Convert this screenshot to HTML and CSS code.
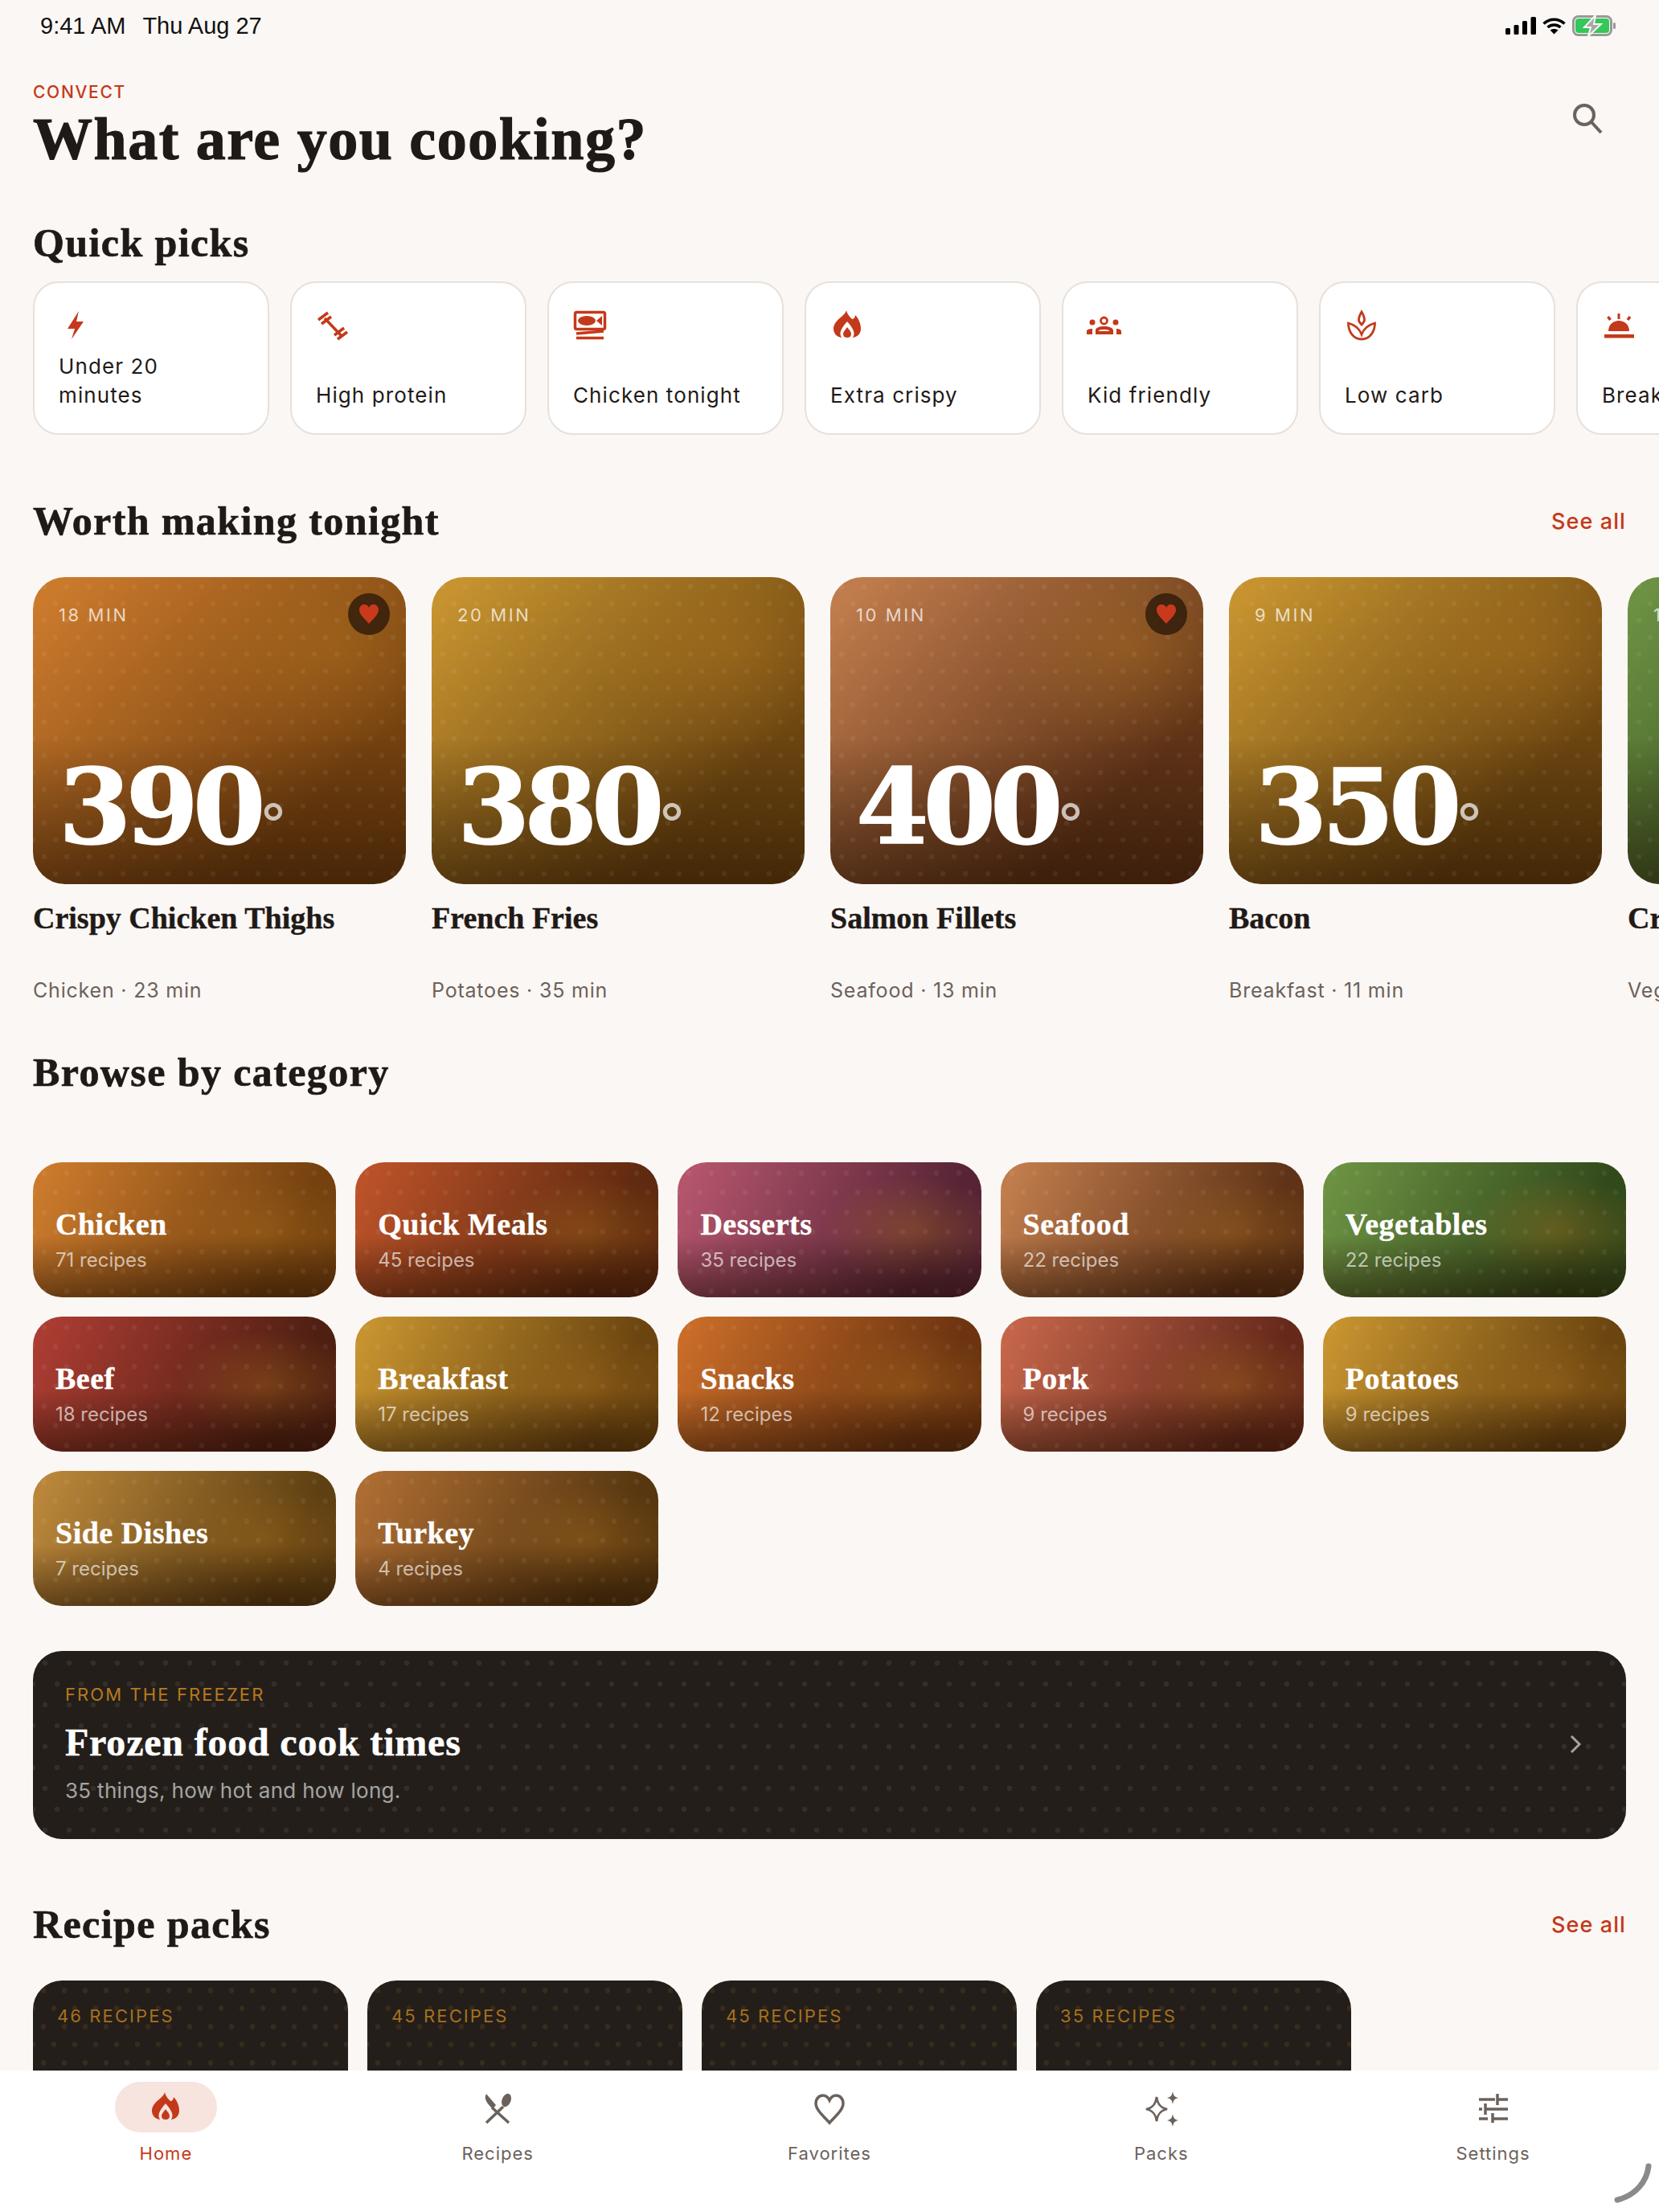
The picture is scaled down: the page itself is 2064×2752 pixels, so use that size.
FILE: index.html
```html
<!DOCTYPE html>
<html lang="en">
<head>
    <meta charset="UTF-8">
    <meta name="viewport" content="width=device-width, initial-scale=1.0">
    <title>Convect</title>
    <link rel="stylesheet" href="styles.css">
</head>
<body>
<div class="app">
    <div class="status-bar">
        <div class="status-time"><span>9:41 AM</span><span>Thu Aug 27</span></div>
        <div class="status-icons">
            <svg width="38" height="22" viewBox="0 0 38 22"><rect x="0" y="14" width="6" height="8" rx="1.5"/><rect x="10.5" y="10" width="6" height="12" rx="1.5"/><rect x="21" y="5" width="6" height="17" rx="1.5"/><rect x="31.5" y="0" width="6.5" height="22" rx="1.5"/></svg>
            <svg width="29" height="21" viewBox="0 0 29 21"><path d="M1.5 7.5C9 .5 20 .5 27.5 7.5" class="wifi-arc"/><path d="M6.5 12C11 8 18 8 22.5 12" class="wifi-arc"/><path d="M14.5 20.5L9.5 15.5C12 13.5 17 13.5 19.5 15.5Z"/></svg>
            <svg width="56" height="26" viewBox="0 0 56 26"><rect x="1.5" y="1.5" width="47" height="23" rx="6" class="batt-shell"/><rect x="4" y="4" width="42" height="18" rx="4" class="batt-fill"/><rect x="51" y="9" width="3" height="8" rx="1.5" class="batt-cap"/><path d="M29 0L15 15H23L20 26L36 11H27Z" class="batt-bolt"/></svg>
        </div>
    </div>

    <div class="content">
        <div class="top-row">
            <div>
                <div class="eyebrow">CONVECT</div>
                <h1>What are you cooking?</h1>
            </div>
            <svg class="search-icon" width="40" height="40" viewBox="0 0 40 40"><circle cx="15" cy="16" r="12"/><path d="M24 25L36 38"/></svg>
        </div>

        <h2 class="section-title quick-title">Quick picks</h2>
        <div class="picks-row">
            <div class="pick">
                <svg class="pick-icon" viewBox="0 0 42 42"><path d="M25 3L11 25H20L16 38L31 16H22Z"/></svg>
                <span>Under 20 minutes</span>
            </div>
            <div class="pick">
                <svg class="pick-icon" viewBox="0 0 42 42"><path d="M11 12L31 33M3 14L15 5M7 19L19 10M23 33L35 24M27 38L39 29" class="line"/></svg>
                <span>High protein</span>
            </div>
            <div class="pick">
                <svg class="pick-icon" viewBox="0 0 42 42"><rect x="2.500" y="4.500" width="37" height="21" rx="2" class="line"/><ellipse cx="17" cy="15" rx="11" ry="6"/><path d="M36 9V21L29 15Z"/><path d="M4 31L38 28M4 36.500H38" class="line"/></svg>
                <span>Chicken tonight</span>
            </div>
            <div class="pick">
                <svg class="pick-icon" viewBox="0 0 42 42"><path fill-rule="evenodd" d="M20 2C19 9 4 14 4 25C4 31 8 35 14 36C11 31 12 26 21 16C30 26 31 31 28 36C34 35 38 31 38 25C38 17 34 11 31 8C31 11 29 13 27 13C24 10 21 7 20 2ZM21 23C18 27 16 29 16 31.500C16 34.500 18 36 21 36C24 36 26 34.500 26 31.500C26 29 24 27 21 23Z"/></svg>
                <span>Extra crispy</span>
            </div>
            <div class="pick">
                <svg class="pick-icon wide" viewBox="0 0 42 42"><circle cx="20.500" cy="15" r="4" class="line thin"/><circle cx="6" cy="17" r="3.500"/><circle cx="35" cy="17" r="3.500"/><path fill-rule="evenodd" d="M10 32V27C10 24 14 22 20.500 22C27 22 32 24 32 27V32ZM14 27V28H27V27C25 25.500 16 25.500 14 27Z"/><path d="M-1 32V28C-1 26 2 25 6 25V32ZM42 32V28C42 26 39 25 36 25V32Z"/></svg>
                <span>Kid friendly</span>
            </div>
            <div class="pick">
                <svg class="pick-icon" viewBox="0 0 42 42"><path d="M21 4C18 9 17.500 11 17.500 14C17.500 16 19 18 21 20C23 18 24.500 16 24.500 14C24.500 11 24 9 21 4Z" class="line thin"/><path d="M4.500 18C4.500 29 11 38 21 38C31 38 37.500 29 37.500 18C30 20 24 24 21 32C18 24 12 20 4.500 18Z" class="line thin"/></svg>
                <span>Low carb</span>
            </div>
            <div class="pick">
                <svg class="pick-icon" viewBox="0 0 42 42"><path d="M8 28C8 20 14 15 21 15C28 15 34 20 34 28Z"/><rect x="3" y="32" width="37" height="4.500"/><rect x="19.500" y="6" width="3" height="7"/><path d="M7.500 10L10.500 14M35 10L32 14" class="line"/></svg>
                <span>Breakfast</span>
            </div>
        </div>

        <div class="section-row tonight-title">
            <h2 class="section-title">Worth making tonight</h2>
            <span class="see-all">See all</span>
        </div>
        <div class="hero-row">
            <div class="recipe">
                <div class="hero-card tone-chicken">
                    <div class="hero-time">18 MIN</div>
                    <div class="fav"><svg width="26" height="26" viewBox="0 0 26 26"><path d="M13 25C8 19 1 14 1 7.500C1 3.500 4 1 7 1C10 1 12 2.500 13 5C14 2.500 16 1 19 1C22 1 25 3.500 25 7.500C25 14 18 19 13 25Z"/></svg></div>
                    <div class="hero-temp">390<span class="deg">°</span></div>
                </div>
                <div class="recipe-name">Crispy Chicken Thighs</div>
                <div class="recipe-meta">Chicken · 23 min</div>
            </div>
            <div class="recipe">
                <div class="hero-card tone-potato">
                    <div class="hero-time">20 MIN</div>
                    <div class="hero-temp">380<span class="deg">°</span></div>
                </div>
                <div class="recipe-name">French Fries</div>
                <div class="recipe-meta">Potatoes · 35 min</div>
            </div>
            <div class="recipe">
                <div class="hero-card tone-seafood">
                    <div class="hero-time">10 MIN</div>
                    <div class="fav"><svg width="26" height="26" viewBox="0 0 26 26"><path d="M13 25C8 19 1 14 1 7.500C1 3.500 4 1 7 1C10 1 12 2.500 13 5C14 2.500 16 1 19 1C22 1 25 3.500 25 7.500C25 14 18 19 13 25Z"/></svg></div>
                    <div class="hero-temp">400<span class="deg">°</span></div>
                </div>
                <div class="recipe-name">Salmon Fillets</div>
                <div class="recipe-meta">Seafood · 13 min</div>
            </div>
            <div class="recipe">
                <div class="hero-card tone-potato">
                    <div class="hero-time">9 MIN</div>
                    <div class="hero-temp">350<span class="deg">°</span></div>
                </div>
                <div class="recipe-name">Bacon</div>
                <div class="recipe-meta">Breakfast · 11 min</div>
            </div>
            <div class="recipe">
                <div class="hero-card tone-veg">
                    <div class="hero-time">12 MIN</div>
                    <div class="hero-temp">375<span class="deg">°</span></div>
                </div>
                <div class="recipe-name">Crispy Broccoli</div>
                <div class="recipe-meta">Vegetables · 14 min</div>
            </div>
        </div>

        <h2 class="section-title browse-title">Browse by category</h2>
        <div class="category-grid">
            <div class="category tone-chicken"><div class="category-name">Chicken</div><div class="category-count">71 recipes</div></div>
            <div class="category tone-quick"><div class="category-name">Quick Meals</div><div class="category-count">45 recipes</div></div>
            <div class="category tone-dessert"><div class="category-name">Desserts</div><div class="category-count">35 recipes</div></div>
            <div class="category tone-seafood"><div class="category-name">Seafood</div><div class="category-count">22 recipes</div></div>
            <div class="category tone-veg"><div class="category-name">Vegetables</div><div class="category-count">22 recipes</div></div>
            <div class="category tone-beef"><div class="category-name">Beef</div><div class="category-count">18 recipes</div></div>
            <div class="category tone-potato"><div class="category-name">Breakfast</div><div class="category-count">17 recipes</div></div>
            <div class="category tone-snack"><div class="category-name">Snacks</div><div class="category-count">12 recipes</div></div>
            <div class="category tone-pork"><div class="category-name">Pork</div><div class="category-count">9 recipes</div></div>
            <div class="category tone-potato"><div class="category-name">Potatoes</div><div class="category-count">9 recipes</div></div>
            <div class="category tone-side"><div class="category-name">Side Dishes</div><div class="category-count">7 recipes</div></div>
            <div class="category tone-turkey"><div class="category-name">Turkey</div><div class="category-count">4 recipes</div></div>
        </div>

        <div class="freezer">
            <div>
                <div class="freezer-label">FROM THE FREEZER</div>
                <div class="freezer-title">Frozen food cook times</div>
                <div class="freezer-sub">35 things, how hot and how long.</div>
            </div>
            <svg class="chevron" width="16" height="26" viewBox="0 0 16 26"><path d="M3 3L13 13L3 23"/></svg>
        </div>

        <div class="section-row packs-title">
            <h2 class="section-title">Recipe packs</h2>
            <span class="see-all">See all</span>
        </div>
        <div class="packs-row">
            <div class="pack">46 RECIPES</div>
            <div class="pack">45 RECIPES</div>
            <div class="pack">45 RECIPES</div>
            <div class="pack">35 RECIPES</div>
        </div>
    </div>

    <div class="tab-bar">
        <div class="tab active">
            <div class="tab-pill"><svg class="tab-icon" viewBox="0 0 42 42"><path fill-rule="evenodd" d="M20 2C19 9 4 14 4 25C4 31 8 35 14 36C11 31 12 26 21 16C30 26 31 31 28 36C34 35 38 31 38 25C38 17 34 11 31 8C31 11 29 13 27 13C24 10 21 7 20 2ZM21 23C18 27 16 29 16 31.500C16 34.500 18 36 21 36C24 36 26 34.500 26 31.500C26 29 24 27 21 23Z"/></svg></div>
            <div class="tab-label">Home</div>
        </div>
        <div class="tab">
            <div class="tab-pill"><svg class="tab-icon" viewBox="0 0 42 42"><path d="M7 4C4 9 6 14 15 23L19 18Z"/><ellipse cx="32" cy="12" rx="5.500" ry="8.500" transform="rotate(22 32 12)"/><path d="M28 20L7 40M14 21L35 40" class="line"/></svg></div>
            <div class="tab-label">Recipes</div>
        </div>
        <div class="tab">
            <div class="tab-pill"><svg class="tab-icon" viewBox="0 0 42 42"><path d="M21 12C19 8 17 6 13 6C8 6 4 10 4 16C4 24 14 32 21 40C28 32 38 24 38 16C38 10 34 6 29 6C25 6 23 8 21 12Z" class="line"/></svg></div>
            <div class="tab-label">Favorites</div>
        </div>
        <div class="tab">
            <div class="tab-pill"><svg class="tab-icon" viewBox="0 0 42 42"><path d="M15 8C16 16 19 21 28 23C19 25 16 30 15 38C14 30 11 25 2 23C11 21 14 16 15 8Z" class="line thin"/><path d="M35 1C36 6 37 8 42 9C37 10 36 12 35 17C34 12 33 10 28 9C33 8 34 6 35 1ZM35 29C36 34 37 36 42 37C37 38 36 40 35 45C34 40 33 38 28 37C33 36 34 34 35 29Z"/></svg></div>
            <div class="tab-label">Packs</div>
        </div>
        <div class="tab">
            <div class="tab-pill"><svg class="tab-icon" viewBox="0 0 42 42"><path d="M3 11H23M26 4V18M26 11H39M3 23H7M11 16V30M11 23H39M3 35H14M20 28V40M20 35H39" class="line"/></svg></div>
            <div class="tab-label">Settings</div>
        </div>
    </div>

    <svg class="home-arc" width="50" height="50" viewBox="0 0 50 50"><path d="M45 4C43 22 30 40 6 46"/></svg>
</div>
</body>
</html>
```

FILE: styles.css
```css
* {
    box-sizing: border-box;
}

body {
    margin: 0;
    font-family: 'Inter', sans-serif;
    color: #1f1a17;
    background-color: #fbf7f4;
}

.app {
    position: relative;
    display: flex;
    flex-direction: column;
    height: 100vh;
    overflow: hidden;
}

/* status bar */
.status-bar {
    display: flex;
    flex: none;
    justify-content: space-between;
    align-items: center;
    height: 64px;
    padding: 0 52px 0 50px;
    font-family: 'Liberation Sans', sans-serif;
    font-size: 29px;
    color: #111;
}

.status-time {
    display: flex;
    gap: 21px;
}

.status-icons {
    display: flex;
    align-items: center;
    gap: 8px;
}

.wifi-arc {
    fill: none;
    stroke: #000;
    stroke-width: 3.5;
}

.batt-shell {
    fill: none;
    stroke: #999;
    stroke-width: 3;
}

.batt-fill {
    fill: #34c759;
}

.batt-cap {
    fill: #999;
}

.batt-bolt {
    fill: #a8a8a8;
    stroke: #fbf7f4;
    stroke-width: 2;
}

/* scrolling content */
.content {
    flex: 1;
    min-height: 0;
    padding: 0 41px;
    overflow: hidden;
}

.top-row {
    display: flex;
    justify-content: space-between;
    padding-top: 36px;
}

.eyebrow {
    font-size: 21px;
    line-height: 30px;
    font-weight: 500;
    letter-spacing: 1.7px;
    color: #c4391a;
}

h1 {
    margin: -2px 0 2px;
    font-family: 'Liberation Serif', serif;
    font-size: 74px;
    line-height: 90px;
    font-weight: 700;
    letter-spacing: 1.5px;
    -webkit-text-stroke: 1.2px #1f1a17;
}

.search-icon {
    margin: 27px 27px 0 0;
    fill: none;
    stroke: #6b625c;
    stroke-width: 4;
}

.section-title {
    margin: 0;
    font-family: 'Liberation Serif', serif;
    font-size: 50px;
    line-height: 56px;
    font-weight: 700;
    letter-spacing: 1.4px;
    -webkit-text-stroke: 0.7px #1f1a17;
}

.section-row {
    display: flex;
    justify-content: space-between;
    align-items: center;
}

.see-all {
    font-size: 27px;
    font-weight: 500;
    letter-spacing: 1.1px;
    color: #c4391a;
}

.quick-title {
    margin-top: 54px;
}

.tonight-title {
    margin-top: 79px;
}

.browse-title {
    margin-top: 57px;
}

.packs-title {
    margin-top: 78px;
}

/* quick picks */
.picks-row {
    display: flex;
    gap: 26px;
    margin-top: 20px;
    margin-right: -41px;
    overflow: hidden;
}

.pick {
    display: flex;
    flex: 0 0 294px;
    flex-direction: column;
    height: 191px;
    padding: 32px 30px 29px 30px;
    font-size: 26px;
    line-height: 36px;
    letter-spacing: 1.1px;
    background-color: #fff;
    border: 2px solid #e8e0da;
    border-radius: 32px;
}

.pick span {
    margin-top: auto;
}

.pick-icon {
    flex: none;
    width: 42px;
    height: 42px;
    overflow: visible;
    fill: #c4391a;
}

.line {
    fill: none;
    stroke: #c4391a;
    stroke-width: 3.500;
}

.thin {
    stroke-width: 2.800;
}

/* recipe cards */
.hero-row {
    display: flex;
    gap: 32px;
    margin-top: 42px;
    margin-right: -41px;
    overflow: hidden;
}

.recipe {
    flex: 0 0 464px;
}

.tone-chicken { --c1: #cb7a2c; --c2: #74410f; }
.tone-potato { --c1: #c6932f; --c2: #6b4510; }
.tone-seafood { --c1: #c07c4c; --c2: #5f3317; }
.tone-veg { --c1: #6c9142; --c2: #324a1b; }
.tone-quick { --c1: #bb5229; --c2: #5f2a0f; }
.tone-dessert { --c1: #b4556c; --c2: #572435; }
.tone-beef { --c1: #ab3c32; --c2: #4f1f12; }
.tone-snack { --c1: #c86c28; --c2: #6c3410; }
.tone-pork { --c1: #c4654a; --c2: #65291a; }
.tone-side { --c1: #b9863a; --c2: #5f4012; }
.tone-turkey { --c1: #ac6c32; --c2: #573710; }

.hero-card {
    position: relative;
    display: flex;
    flex-direction: column;
    justify-content: space-between;
    height: 382px;
    padding: 32px 32px 11px;
    border-radius: 40px;
    overflow: hidden;
    background-image:
        radial-gradient(circle, rgba(255,255,255,0.06) 3px, transparent 3.6px),
        radial-gradient(circle, rgba(255,255,255,0.06) 3px, transparent 3.6px),
        linear-gradient(to bottom, transparent 52%, rgba(25,10,0,0.5) 100%),
        radial-gradient(ellipse 38% 32% at 80% 23%, rgba(175,115,30,0.4), transparent),
        linear-gradient(135deg, var(--c1) 5%, var(--c2) 75%);
    background-size: 28px 42px, 28px 42px, auto, auto, auto;
    background-position: 0 -9px, 14px 12px, 0 0, 0 0, 0 0;
}

.hero-time {
    font-size: 22px;
    line-height: 30px;
    letter-spacing: 2.6px;
    color: rgba(255,255,255,0.72);
}

.fav {
    position: absolute;
    top: 20px;
    right: 20px;
    display: flex;
    justify-content: center;
    align-items: center;
    width: 52px;
    height: 52px;
    border-radius: 50%;
    background-color: rgba(45,25,10,0.8);
    fill: #c93a1c;
}

.hero-temp {
    font-family: 'DejaVu Serif', serif;
    font-size: 130px;
    line-height: 130px;
    font-weight: 700;
    letter-spacing: -7px;
    color: #fff;
    -webkit-text-stroke: 1.5px #fff;
}

.deg {
    margin-left: 1px;
    font-family: 'Inter', sans-serif;
    font-size: 68px;
    font-weight: 400;
    letter-spacing: 0;
    color: rgba(255,255,255,0.7);
    -webkit-text-stroke: 0;
}

.recipe-name {
    min-height: 96px;
    margin-top: 19px;
    font-family: 'Liberation Serif', serif;
    font-size: 38px;
    line-height: 46px;
    font-weight: 700;
    white-space: nowrap;
    -webkit-text-stroke: 0.4px #1f1a17;
}

.recipe-meta {
    font-size: 25px;
    line-height: 34px;
    letter-spacing: 0.8px;
    color: #6b625c;
    white-space: nowrap;
}

/* categories */
.category-grid {
    display: grid;
    grid-template-columns: repeat(5, 1fr);
    grid-auto-rows: 168px;
    gap: 24px;
    margin-top: 84px;
}

.category {
    display: flex;
    flex-direction: column;
    justify-content: flex-end;
    padding: 0 28px 30px;
    border-radius: 36px;
    background-image:
        radial-gradient(circle, rgba(255,255,255,0.06) 3px, transparent 3.6px),
        radial-gradient(circle, rgba(255,255,255,0.06) 3px, transparent 3.6px),
        linear-gradient(to bottom, transparent 55%, rgba(25,10,0,0.5) 100%),
        radial-gradient(ellipse 30% 40% at 77% 50%, rgba(175,115,30,0.35), transparent),
        linear-gradient(115deg, var(--c1) 5%, var(--c2) 80%);
    background-size: 28px 49px, 28px 49px, auto, auto, auto;
    background-position: 0 -11px, 14px 13px, 0 0, 0 0, 0 0;
}

.category-name {
    margin-bottom: 7px;
    font-family: 'Liberation Serif', serif;
    font-size: 38px;
    line-height: 44px;
    font-weight: 700;
    letter-spacing: 0.5px;
    color: #fff;
    -webkit-text-stroke: 0.4px #fff;
}

.category-count {
    font-size: 24px;
    line-height: 32px;
    color: rgba(255,255,255,0.65);
}

/* freezer banner */
.freezer,
.pack {
    background-color: #231e1a;
}

.freezer {
    display: flex;
    justify-content: space-between;
    align-items: center;
    height: 234px;
    margin-top: 56px;
    padding: 0 55px 3px 40px;
    border-radius: 36px;
    background-image:
        radial-gradient(circle, rgba(255,255,255,0.07) 3px, transparent 3.6px),
        radial-gradient(circle, rgba(255,255,255,0.07) 3px, transparent 3.6px);
    background-size: 30px 52px;
    background-position: 0 -11px, 15px 15px;
}

.freezer-label {
    font-size: 22px;
    line-height: 30px;
    letter-spacing: 2.1px;
    color: #b87a1e;
}

.freezer-title {
    margin-top: 17px;
    font-family: 'Liberation Serif', serif;
    font-size: 48px;
    line-height: 56px;
    font-weight: 700;
    letter-spacing: 0.8px;
    color: #fff;
    -webkit-text-stroke: 0.5px #fff;
}

.freezer-sub {
    margin-top: 14px;
    font-size: 26px;
    line-height: 36px;
    letter-spacing: 0.3px;
    color: rgba(255,255,255,0.6);
}

.chevron {
    fill: none;
    stroke: #a8a29c;
    stroke-width: 3;
}

/* packs */
.packs-row {
    display: flex;
    gap: 24px;
    margin-top: 42px;
}

.pack {
    flex: 0 0 392px;
    height: 300px;
    padding: 29px 30px;
    font-size: 22px;
    line-height: 30px;
    letter-spacing: 2.1px;
    color: #a8701c;
    border-radius: 36px;
    background-image:
        radial-gradient(circle, rgba(190,120,40,0.14) 3px, transparent 3.6px),
        radial-gradient(circle, rgba(190,120,40,0.14) 3px, transparent 3.6px);
    background-size: 26px 45px;
    background-position: 0 -10px, 13px 12px;
}

/* bottom tabs */
.tab-bar {
    display: flex;
    flex: none;
    height: 176px;
    padding-top: 14px;
    background-color: #fff;
}

.tab {
    display: flex;
    flex: 1;
    flex-direction: column;
    align-items: center;
    color: #6b625c;
}

.tab-pill {
    display: flex;
    justify-content: center;
    align-items: center;
    width: 127px;
    height: 63px;
    border-radius: 32px;
}

.tab-icon {
    width: 42px;
    height: 42px;
    overflow: visible;
    fill: #6b625c;
}

.tab-icon .line {
    stroke: #6b625c;
}

.tab-label {
    margin-top: 11px;
    font-size: 22px;
    line-height: 30px;
    letter-spacing: 1px;
}

.active {
    color: #c4391a;
}

.active .tab-pill {
    background-color: #f7e4df;
}

.active .tab-icon {
    fill: #c4391a;
}

.home-arc {
    position: absolute;
    right: 8px;
    bottom: 11px;
    fill: none;
    stroke: #8a8a8a;
    stroke-width: 7;
    stroke-linecap: round;
}
```
